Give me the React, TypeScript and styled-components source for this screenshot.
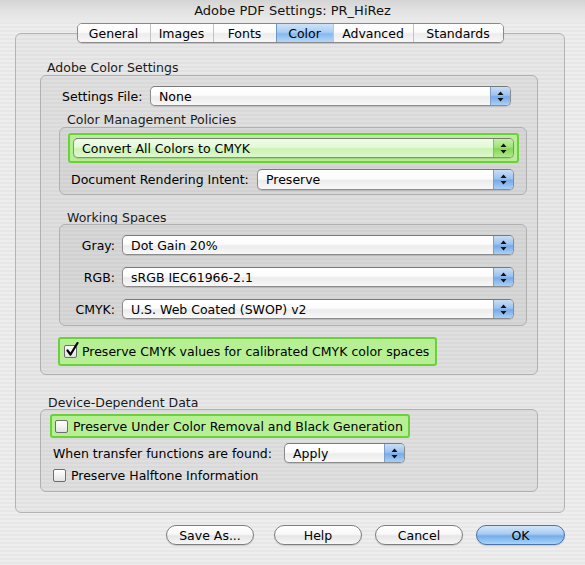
import styled, { createGlobalStyle, css } from 'styled-components';

const GlobalStyle = createGlobalStyle`
  html, body {
    margin: 0;
    padding: 0;
  }
  body {
    font-family: 'DejaVu Sans', 'Liberation Sans', sans-serif;
    font-size: 12.5px;
    color: #000;
  }
`;

const stripes = `repeating-linear-gradient(to bottom, #eeeeee 0px, #eeeeee 2px, #e7e7e7 2px, #e7e7e7 4px)`;

const Window = styled.div`
  width: 585px;
  height: 565px;
  display: flex;
  flex-direction: column;
  background: ${stripes};
  overflow: hidden;
`;

const TitleBar = styled.div`
  height: 22px;
  line-height: 22px;
  text-align: center;
  font-size: 13px;
  color: #111;
  background: linear-gradient(to bottom, #d4d4d4 0%, #e2e2e2 50%, #ebebeb 100%);
`;

const Body = styled.div`
  display: flex;
  flex-direction: column;
  padding: 0 20px 0 15px;
`;

const TabRow = styled.div`
  display: flex;
  justify-content: center;
  margin-top: 1px;
  margin-bottom: -10px;
  position: relative;
  z-index: 1;
`;

const TabGroup = styled.div`
  display: flex;
  height: 20px;
  border: 1px solid #8a8a8a;
  border-radius: 5px;
  overflow: hidden;
  box-shadow: 0 1px 1px rgba(0, 0, 0, 0.15);
  box-sizing: border-box;
`;

const Tab = styled.div<{ $w: number; $active?: boolean }>`
  width: ${(p) => p.$w}px;
  display: flex;
  align-items: center;
  justify-content: center;
  font-size: 12.5px;
  border-left: 1px solid #c4c4c4;
  background: linear-gradient(to bottom, #ffffff 0%, #fbfbfb 45%, #ececec 55%, #f8f8f8 100%);
  box-sizing: border-box;
  &:first-child {
    border-left: none;
  }
  ${(p) =>
    p.$active &&
    css`
      border-left-color: #6f95c4;
      background: linear-gradient(to bottom, #cfe3f8 0%, #a9cdf2 45%, #87b8ec 55%, #b3d8f8 100%);
    `}
`;

const Panel = styled.div`
  width: 550px;
  height: 480px;
  box-sizing: border-box;
  border: 1px solid #b3b3b3;
  border-radius: 6px;
  background: rgba(0, 0, 0, 0.025);
  display: flex;
  flex-direction: column;
  padding-top: 26px;
`;

const GroupTitle = styled.div<{ $ml: number; $mt?: number; $mb?: number }>`
  height: 15px;
  line-height: 15px;
  margin-left: ${(p) => p.$ml}px;
  margin-top: ${(p) => p.$mt ?? 0}px;
  margin-bottom: ${(p) => p.$mb ?? 0}px;
  color: #1a1a1a;
  white-space: nowrap;
`;

const GroupBox = styled.div<{ $ml: number; $w: number; $pb: number }>`
  margin-left: ${(p) => p.$ml}px;
  width: ${(p) => p.$w}px;
  box-sizing: border-box;
  border: 1px solid #b0b0b0;
  border-radius: 6px;
  background: rgba(0, 0, 0, 0.035);
  padding-bottom: ${(p) => p.$pb}px;
  display: flex;
  flex-direction: column;
`;

const Row = styled.div<{ $mt: number; $pl?: number; $pr?: number; $h?: number }>`
  display: flex;
  align-items: center;
  height: ${(p) => p.$h ?? 20}px;
  margin-top: ${(p) => p.$mt}px;
  padding-left: ${(p) => p.$pl ?? 0}px;
  padding-right: ${(p) => p.$pr ?? 0}px;
  flex: none;
`;

const FillRow = styled(Row)`
  flex: 1;
`;

const Label = styled.span<{ $w?: number; $right?: boolean }>`
  flex: none;
  width: ${(p) => (p.$w ? `${p.$w}px` : 'auto')};
  text-align: ${(p) => (p.$right ? 'right' : 'left')};
  margin-right: ${(p) => (p.$right ? 7 : 0)}px;
  white-space: nowrap;
`;

const Highlight = styled.div<{ $mt: number; $ml: number; $w: number; $h: number }>`
  margin-top: ${(p) => p.$mt}px;
  margin-left: ${(p) => p.$ml}px;
  width: ${(p) => p.$w}px;
  height: ${(p) => p.$h}px;
  box-sizing: border-box;
  border: 2px solid #6cd03a;
  border-radius: 3px;
  background: #b7ef94;
  display: flex;
  align-items: center;
`;

const PopupBox = styled.div<{ $w?: number; $green?: boolean }>`
  flex: ${(p) => (p.$w ? 'none' : '1')};
  width: ${(p) => (p.$w ? `${p.$w}px` : 'auto')};
  height: 100%;
  box-sizing: border-box;
  border: 1px solid #8c8c8c;
  border-top-color: #7a7a7a;
  border-radius: 5px;
  display: flex;
  align-items: center;
  padding-left: 8px;
  overflow: hidden;
  background: ${(p) =>
    p.$green
      ? 'linear-gradient(to bottom, #effce6 0%, #e4f9d6 45%, #cdf2b4 55%, #def7cd 100%)'
      : 'linear-gradient(to bottom, #ffffff 0%, #fcfcfc 45%, #ececec 55%, #f8f8f8 100%)'};
  box-shadow: 0 1px 1px rgba(0, 0, 0, 0.12);
`;

const PopupText = styled.span`
  flex: 1;
  white-space: nowrap;
`;

const Stepper = styled.div<{ $green?: boolean }>`
  width: 19px;
  align-self: stretch;
  border-left: 1px solid ${(p) => (p.$green ? '#7fc45a' : '#7d9fc9')};
  background: ${(p) =>
    p.$green
      ? 'linear-gradient(to bottom, #c4f0a4 0%, #a2e27a 45%, #86d656 55%, #aee98a 100%)'
      : 'linear-gradient(to bottom, #c9def6 0%, #9cc3ef 45%, #77aae8 55%, #a9d0f6 100%)'};
  display: flex;
  align-items: center;
  justify-content: center;
`;

const CheckRow = styled.div<{ $mt?: number; $pl?: number }>`
  display: flex;
  align-items: center;
  margin-top: ${(p) => p.$mt ?? 0}px;
  padding-left: ${(p) => p.$pl ?? 0}px;
  height: 16px;
  white-space: nowrap;
`;

const Box = styled.span`
  position: relative;
  flex: none;
  width: 13px;
  height: 13px;
  box-sizing: border-box;
  border: 1px solid #6e6e6e;
  border-radius: 2px;
  background: linear-gradient(to bottom, #ffffff 0%, #f3f3f3 50%, #e2e2e2 100%);
  margin-right: 5px;
`;

const CheckMark = styled.svg`
  position: absolute;
  left: 0px;
  top: -4px;
  width: 14px;
  height: 15px;
`;

const ButtonBar = styled.div`
  display: flex;
  justify-content: flex-end;
  gap: 13px;
  margin-top: 12px;
`;

const Button = styled.div<{ $primary?: boolean; $w: number; $mr?: number }>`
  width: ${(p) => p.$w}px;
  height: 20px;
  box-sizing: border-box;
  border: 1px solid ${(p) => (p.$primary ? '#4c72a6' : '#7d7d7d')};
  border-radius: 10px;
  margin-right: ${(p) => p.$mr ?? 0}px;
  display: flex;
  align-items: center;
  justify-content: center;
  font-size: 12.5px;
  box-shadow: 0 1px 1px rgba(0, 0, 0, 0.15);
  background: ${(p) =>
    p.$primary
      ? 'linear-gradient(to bottom, #d3e6fa 0%, #a6cbf2 45%, #74adec 55%, #a7d4f9 100%)'
      : 'linear-gradient(to bottom, #ffffff 0%, #f8f8f8 45%, #e6e6e6 55%, #f6f6f6 100%)'};
`;

function Arrows() {
  return (
    <svg width="7" height="11" viewBox="0 0 7 11">
      <path d="M3.5 0.5 L6.5 4 L0.5 4 Z" fill="#111" />
      <path d="M3.5 10.5 L6.5 7 L0.5 7 Z" fill="#111" />
    </svg>
  );
}

function Popup({ value, w, green }: { value: string; w?: number; green?: boolean }) {
  return (
    <PopupBox $w={w} $green={green}>
      <PopupText>{value}</PopupText>
      <Stepper $green={green}>
        <Arrows />
      </Stepper>
    </PopupBox>
  );
}

function Check({ checked, label }: { checked?: boolean; label: string }) {
  return (
    <>
      <Box>
        {checked && (
          <CheckMark viewBox="0 0 14 15">
            <path
              d="M2.5 8.5 L5.5 12.5 L12.5 1"
              stroke="#000"
              strokeWidth="2.2"
              fill="none"
              strokeLinecap="round"
              strokeLinejoin="round"
            />
          </CheckMark>
        )}
      </Box>
      <span>{label}</span>
    </>
  );
}

const tabs = [
  { name: 'General', w: 72 },
  { name: 'Images', w: 63 },
  { name: 'Fonts', w: 63 },
  { name: 'Color', w: 57, active: true },
  { name: 'Advanced', w: 80 },
  { name: 'Standards', w: 90 },
];

const spaces = [
  { label: 'Gray:', value: 'Dot Gain 20%' },
  { label: 'RGB:', value: 'sRGB IEC61966-2.1' },
  { label: 'CMYK:', value: 'U.S. Web Coated (SWOP) v2' },
];

export default function App() {
  return (
    <Window>
      <GlobalStyle />
      <TitleBar>Adobe PDF Settings: PR_HiRez</TitleBar>
      <Body>
        <TabRow>
          <TabGroup>
            {tabs.map((t) => (
              <Tab key={t.name} $w={t.w} $active={t.active}>
                {t.name}
              </Tab>
            ))}
          </TabGroup>
        </TabRow>
        <Panel>
          <GroupTitle $ml={31}>Adobe Color Settings</GroupTitle>
          <GroupBox $ml={24} $w={498} $pb={8}>
            <Row $mt={10} $pl={21} $pr={26}>
              <Label $w={88}>Settings File:</Label>
              <Popup value="None" />
            </Row>
            <GroupTitle $ml={26} $mt={6}>
              Color Management Policies
            </GroupTitle>
            <GroupBox $ml={18} $w={468} $pb={4}>
              <Highlight $mt={5} $ml={8} $w={451} $h={30}>
                <FillRow $mt={0} $pl={3} $pr={3}>
                  <Popup value="Convert All Colors to CMYK" green />
                </FillRow>
              </Highlight>
              <Row $mt={6} $pl={11} $pr={12} $h={21}>
                <Label $w={186}>Document Rendering Intent:</Label>
                <Popup value="Preserve" />
              </Row>
            </GroupBox>
            <GroupTitle $ml={26} $mt={15} $mb={-1}>
              Working Spaces
            </GroupTitle>
            <GroupBox $ml={18} $w={468} $pb={6}>
              {spaces.map((s, i) => (
                <Row key={s.label} $mt={i === 0 ? 10 : 12} $pr={12}>
                  <Label $w={55} $right>
                    {s.label}
                  </Label>
                  <Popup value={s.value} />
                </Row>
              ))}
            </GroupBox>
            <Highlight $mt={11} $ml={17} $w={379} $h={29}>
              <CheckRow $pl={4}>
                <Check checked label="Preserve CMYK values for calibrated CMYK color spaces" />
              </CheckRow>
            </Highlight>
          </GroupBox>
          <GroupTitle $ml={32} $mt={20} $mb={-1}>
            Device-Dependent Data
          </GroupTitle>
          <GroupBox $ml={24} $w={498} $pb={8}>
            <Highlight $mt={4} $ml={9} $w={360} $h={24}>
              <CheckRow $pl={3}>
                <Check label="Preserve Under Color Removal and Black Generation" />
              </CheckRow>
            </Highlight>
            <Row $mt={5} $pl={12}>
              <Label $w={231}>When transfer functions are found:</Label>
              <Popup value="Apply" w={121} />
            </Row>
            <CheckRow $mt={4} $pl={12}>
              <Check label="Preserve Halftone Information" />
            </CheckRow>
          </GroupBox>
        </Panel>
        <ButtonBar>
          <Button $w={88} $mr={7}>
            Save As...
          </Button>
          <Button $w={88}>Help</Button>
          <Button $w={88}>Cancel</Button>
          <Button $w={89} $primary>
            OK
          </Button>
        </ButtonBar>
      </Body>
    </Window>
  );
}
